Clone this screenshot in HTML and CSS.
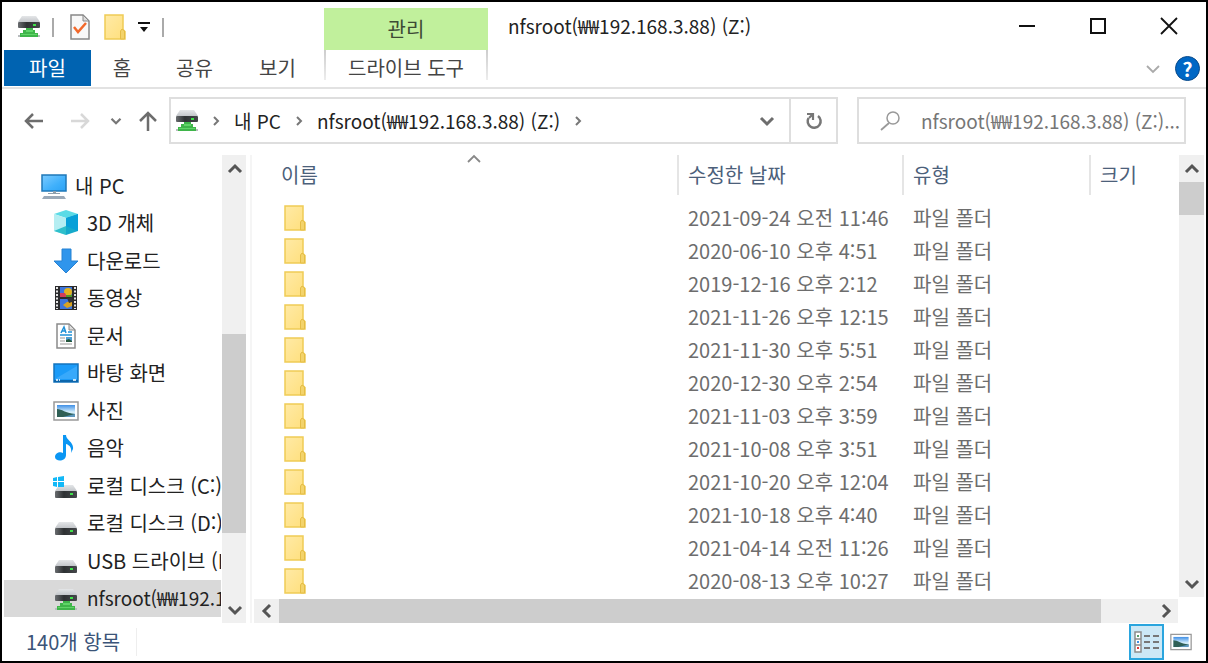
FILE: index.html
```html
<!DOCTYPE html>
<html lang="ko">
	<head>
		<meta charset="UTF-8" />
		<meta name="viewport" content="width=device-width, initial-scale=1.0" />
		<title>nfsroot(₩₩192.168.3.88) (Z:)</title>
		<link rel="stylesheet" href="styles.css">
	</head>
	<body>
		<!-- shared icons -->
		<svg class="sprite" aria-hidden="true">
			<defs>
				<linearGradient id="gFolder" x1="0" y1="0" x2="1" y2="1">
					<stop offset="0" stop-color="#ffeaa6" />
					<stop offset="1" stop-color="#ffdf7c" />
				</linearGradient>
				<linearGradient id="gScreen" x1="0" y1="0" x2="1" y2="1">
					<stop offset="0" stop-color="#7ccbff" />
					<stop offset="0.6" stop-color="#3fb0fb" />
					<stop offset="1" stop-color="#2ba2f5" />
				</linearGradient>
				<linearGradient id="gTop" x1="0" y1="0" x2="0" y2="1">
					<stop offset="0" stop-color="#e4e6e8" />
					<stop offset="1" stop-color="#c3c6ca" />
				</linearGradient>
				<linearGradient id="gBody" x1="0" y1="0" x2="1" y2="0">
					<stop offset="0" stop-color="#6a6d70" />
					<stop offset="0.4" stop-color="#2e3133" />
					<stop offset="1" stop-color="#45484b" />
				</linearGradient>
				<linearGradient id="gSky" x1="0" y1="0" x2="0" y2="1">
					<stop offset="0" stop-color="#3f8fe6" />
					<stop offset="0.6" stop-color="#d8f0fb" />
					<stop offset="1" stop-color="#8fc3e8" />
				</linearGradient>
			</defs>
			<symbol id="folder" viewBox="0 0 22 26">
				<path d="M1 1h18v14.500l2 2V25H1z" fill="url(#gFolder)" stroke="#f0cc55" stroke-width="1.500" />
				<path d="M16.500 25v-8l1.500-2 2.500 2V25z" fill="#f3d36b" stroke="#e5bd45" />
			</symbol>
			<symbol id="netdrive" viewBox="0 0 22 22">
				<path d="M4 0h14l4 6H0z" fill="url(#gTop)" />
				<rect x="0" y="6" width="22" height="6" rx="1" fill="url(#gBody)" />
				<rect x="15" y="8" width="3" height="2" fill="#3fe04a" />
				<path d="M8 12h7v2h2v3h3v4H2v-4h3v-3h3z" fill="#3fb54a" />
				<path d="M8 14h7v2H8zM3 18h16v1H3z" fill="#5fd567" />
				<path d="M0 19h2v2H0zM20 19h2v2h-2z" fill="#b9bcbf" />
			</symbol>
			<symbol id="drive" viewBox="0 0 26 26">
				<path d="M6 12h14l4 6H2z" fill="url(#gTop)" />
				<rect x="2" y="18" width="22" height="7" rx="1" fill="url(#gBody)" />
				<rect x="17" y="20" width="3" height="2" fill="#3fe04a" />
			</symbol>
			<symbol id="windrive" viewBox="0 0 26 26">
				<use href="#drive" />
				<path d="M0 5l4-1v4H0zM5 4l6-1v5H5zM0 9h4v5l-4-1zM5 9h6v5H5z" fill="#12b8f7" />
			</symbol>
			<symbol id="pc" viewBox="0 0 26 26">
				<rect x="1" y="2" width="24" height="16" fill="url(#gScreen)" stroke="#1f78b8" stroke-width="1.500" />
				<path d="M12 18h3v2h4v1H7v-1h5z" fill="#8fa0ad" />
				<path d="M3 23h20l2 3H1z" fill="#9aa9b8" />
			</symbol>
			<symbol id="cube" viewBox="0 0 26 26">
				<path d="M13 0l12 4-12 4L1 4z" fill="#5bdbe6" />
				<path d="M1 4l12 4v17L1 21z" fill="#b5eef2" />
				<path d="M1 21l12-5v9z" fill="#2fbfcb" />
				<path d="M25 4L13 8v17l12-4z" fill="#16aacb" />
				<path d="M25 4v17l-12-5V8z" fill="#08a0d8" />
			</symbol>
			<symbol id="download" viewBox="0 0 26 26">
				<path d="M9 1h9v12h7L13 25 1 13h8z" fill="#2f95ec" stroke="#2782d3" />
			</symbol>
			<symbol id="video" viewBox="0 0 26 26">
				<rect x="2" y="1" width="22" height="24" fill="#2b2b2d" />
				<path d="M4 2v22M22 2v22" stroke="#e6e6e6" stroke-width="2" stroke-dasharray="2 1.500" />
				<path d="M7 2h12v10H7zM7 14h12v10H7z" fill="#3c75dc" />
				<circle cx="15" cy="7" r="4" fill="#e3b31f" />
				<path d="M7 8h5l2 4H7z" fill="#d23e59" />
				<path d="M13 10h6v2h-6z" fill="#4f9a2c" />
				<path d="M10 20l4-3 5-1v5l-5 2z" fill="#d9a321" />
				<path d="M14 13h5v4l-3 1z" fill="#30333a" />
			</symbol>
			<symbol id="doc" viewBox="0 0 26 26">
				<path d="M4 1h12l6 6v18H4z" fill="#fff" stroke="#8b8b8b" stroke-width="1.500" />
				<path d="M16 1v6h6z" fill="#ddd" stroke="#8b8b8b" />
				<path d="M8 10l3-6 2 6M9 8h4" fill="none" stroke="#2091d8" stroke-width="1.500" />
				<path d="M15 9h4M7 12h12" stroke="#2091d8" stroke-width="1.500" />
				<path d="M7 15h5M7 18h5M7 21h12" stroke="#999" />
				<path d="M13 14h6v5h-6z" fill="#4e9fd3" />
				<path d="M13 19v-2l3-1 3 2v1z" fill="#25573e" />
			</symbol>
			<symbol id="desktop" viewBox="0 0 26 26">
				<rect x="1" y="4" width="24" height="18" fill="#1b9bf8" stroke="#1574bd" stroke-width="1.500" />
				<path d="M2 19L24 6v13z" fill="#38a9fb" />
				<path d="M1 20h24v2H1z" fill="#0c66ac" />
				<path d="M3 20h2M6 20h1M20 20h3" stroke="#fff" stroke-width="1.500" />
			</symbol>
			<symbol id="picture" viewBox="0 0 26 20">
				<rect x="1" y="1" width="24" height="18" fill="#fff" stroke="#999" stroke-width="1.500" />
				<rect x="4" y="4" width="18" height="12" fill="url(#gSky)" />
				<path d="M4 8c5 0 8 4 18 5v1l-7 2H4z" fill="#2f5f55" />
				<path d="M10 16l12-3v3z" fill="#5d97bd" />
			</symbol>
			<symbol id="music" viewBox="0 0 26 26">
				<path d="M10 0h3c0 5 8 7 7 14l-2 4c1-6-2-8-5-9v11c0 7-11 7-11 2 0-4 5-6 8-4z" fill="#0b96f3" />
			</symbol>
			<symbol id="chevR" viewBox="0 0 10 10">
				<path d="M3 1l4 4-4 4" fill="none" stroke="currentColor" stroke-width="2" />
			</symbol>
			<symbol id="chevD" viewBox="0 0 16 16">
				<path d="M2 5l6 6 6-6" fill="none" stroke="currentColor" stroke-width="3" />
			</symbol>
			<symbol id="thinD" viewBox="0 0 16 16">
				<path d="M2 5l6 6 6-6" fill="none" stroke="currentColor" stroke-width="1.800" />
			</symbol>
		</svg>

		<div class="window">
			<header class="ribbon">
				<div class="quick-access">
					<svg class="icon-22"><use href="#netdrive" /></svg>
					<span class="divider"></span>
					<button class="quick-btn check" aria-label="속성">
						<svg viewBox="0 0 20 26" width="20" height="26">
							<path d="M1 1h12l6 6v18H1z" fill="#f8f8f8" stroke="#888" stroke-width="1.500" />
							<path d="M13 1v6h6z" fill="#ddd" stroke="#888" />
							<path d="M4 13l4 5 8-9" fill="none" stroke="#f2682a" stroke-width="2.500" />
						</svg>
					</button>
					<button class="quick-btn new-folder" aria-label="새 폴더">
						<svg class="icon-folder"><use href="#folder" /></svg>
					</button>
					<button class="quick-btn" aria-label="빠른 실행 도구 모음 사용자 지정">
						<svg viewBox="0 0 12 12" width="12" height="12">
							<path d="M0 1h12v2H0zM2 6h8l-4 5z" fill="#111" />
						</svg>
					</button>
					<span class="divider"></span>
				</div>
				<div class="context-title">관리</div>
				<div class="title-area">
					<h1>nfsroot(₩₩192.168.3.88) (Z:)</h1>
					<div class="window-buttons">
						<button aria-label="최소화">
							<svg viewBox="0 0 18 18" width="18" height="18"><path d="M1 9h16" stroke="#111" stroke-width="2" /></svg>
						</button>
						<button aria-label="최대화">
							<svg viewBox="0 0 18 18" width="18" height="18"><path d="M2 2h14v14H2z" fill="none" stroke="#111" stroke-width="2" /></svg>
						</button>
						<button aria-label="닫기">
							<svg viewBox="0 0 18 18" width="18" height="18"><path d="M1 1l16 16M17 1L1 17" stroke="#111" stroke-width="1.800" /></svg>
						</button>
					</div>
				</div>
				<div class="tabs">
					<button class="tab file">파일</button>
					<button class="tab home">홈</button>
					<button class="tab">공유</button>
					<button class="tab">보기</button>
				</div>
				<button class="tab context">드라이브 도구</button>
				<div class="ribbon-tools">
					<button class="expand" aria-label="리본 확장"><svg class="icon-16"><use href="#thinD" /></svg></button>
					<button class="help" aria-label="도움말">?</button>
				</div>
			</header>

			<div class="nav-row">
				<div class="history">
					<button aria-label="뒤로">
						<svg viewBox="0 0 20 20" width="20" height="20"><path d="M19 10H2M9 3l-7 7 7 7" fill="none" stroke="#6d6d6d" stroke-width="2.500" /></svg>
					</button>
					<button aria-label="앞으로" class="forward">
						<svg viewBox="0 0 20 20" width="20" height="20"><path d="M1 10h17M11 3l7 7-7 7" fill="none" stroke="#d8d8d8" stroke-width="2.500" /></svg>
					</button>
					<button aria-label="최근 위치" class="recent"><svg class="icon-12"><use href="#chevD" /></svg></button>
					<button aria-label="위로">
						<svg viewBox="0 0 20 20" width="20" height="20"><path d="M10 20V2M2 10l8-8 8 8" fill="none" stroke="#6d6d6d" stroke-width="2.500" /></svg>
					</button>
				</div>
				<div class="address">
					<svg class="icon-22"><use href="#netdrive" /></svg>
					<svg class="crumb-arrow"><use href="#chevR" /></svg>
					<a href="#pc-root">내 PC</a>
					<svg class="crumb-arrow"><use href="#chevR" /></svg>
					<a href="#z">nfsroot(₩₩192.168.3.88) (Z:)</a>
					<svg class="crumb-arrow"><use href="#chevR" /></svg>
					<button class="dropdown" aria-label="이전 위치"><svg class="icon-16"><use href="#chevD" /></svg></button>
					<button class="refresh" aria-label="새로 고침">
						<svg viewBox="0 0 18 18" width="18" height="18">
							<path d="M13 4a6.500 6.500 0 1 1-9.500 2" fill="none" stroke="#777" stroke-width="2.500" />
							<path d="M2 2h6v6M8 2L4 6" fill="none" stroke="#777" stroke-width="2.200" />
						</svg>
					</button>
				</div>
				<label class="search">
					<svg viewBox="0 0 22 20" width="22" height="20">
						<circle cx="14" cy="7" r="6" fill="none" stroke="#999" stroke-width="1.500" />
						<path d="M10 12l-8 7" stroke="#999" stroke-width="1.800" />
					</svg>
					<input type="text" aria-label="검색" placeholder="nfsroot(₩₩192.168.3.88) (Z:)...">
				</label>
			</div>

			<div class="content">
				<nav class="tree">
					<a href="#pc-root" class="root"><svg><use href="#pc" /></svg>내 PC</a>
					<a href="#3d"><svg><use href="#cube" /></svg>3D 개체</a>
					<a href="#downloads"><svg><use href="#download" /></svg>다운로드</a>
					<a href="#videos"><svg><use href="#video" /></svg>동영상</a>
					<a href="#documents"><svg><use href="#doc" /></svg>문서</a>
					<a href="#desk"><svg><use href="#desktop" /></svg>바탕 화면</a>
					<a href="#pictures"><svg><use href="#picture" /></svg>사진</a>
					<a href="#sounds"><svg><use href="#music" /></svg>음악</a>
					<a href="#c"><svg><use href="#windrive" /></svg>로컬 디스크 (C:)</a>
					<a href="#d"><svg><use href="#drive" /></svg>로컬 디스크 (D:)</a>
					<a href="#h"><svg><use href="#drive" /></svg>USB 드라이브 (H:)</a>
					<a href="#z" class="selected"><svg class="net"><use href="#netdrive" /></svg>nfsroot(₩₩192.168.3.88) (Z:)</a>
				</nav>
				<div class="scrollbar tree-scroll">
					<button aria-label="위로 스크롤"><svg class="icon-16 up"><use href="#chevD" /></svg></button>
					<div class="track"><div class="thumb"></div></div>
					<button aria-label="아래로 스크롤"><svg class="icon-16"><use href="#chevD" /></svg></button>
				</div>

				<main class="files">
					<div class="list">
						<table>
							<thead>
								<tr>
									<th class="col-name"><span>이름<svg class="icon-16 sort"><use href="#thinD" /></svg></span></th>
									<th class="col-date"><span>수정한 날짜</span></th>
									<th class="col-type"><span>유형</span></th>
									<th class="col-size"><span>크기</span></th>
								</tr>
							</thead>
							<tbody>
								<tr><td><svg class="icon-folder"><use href="#folder" /></svg></td><td>2021-09-24 오전 11:46</td><td>파일 폴더</td><td></td></tr>
								<tr><td><svg class="icon-folder"><use href="#folder" /></svg></td><td>2020-06-10 오후 4:51</td><td>파일 폴더</td><td></td></tr>
								<tr><td><svg class="icon-folder"><use href="#folder" /></svg></td><td>2019-12-16 오후 2:12</td><td>파일 폴더</td><td></td></tr>
								<tr><td><svg class="icon-folder"><use href="#folder" /></svg></td><td>2021-11-26 오후 12:15</td><td>파일 폴더</td><td></td></tr>
								<tr><td><svg class="icon-folder"><use href="#folder" /></svg></td><td>2021-11-30 오후 5:51</td><td>파일 폴더</td><td></td></tr>
								<tr><td><svg class="icon-folder"><use href="#folder" /></svg></td><td>2020-12-30 오후 2:54</td><td>파일 폴더</td><td></td></tr>
								<tr><td><svg class="icon-folder"><use href="#folder" /></svg></td><td>2021-11-03 오후 3:59</td><td>파일 폴더</td><td></td></tr>
								<tr><td><svg class="icon-folder"><use href="#folder" /></svg></td><td>2021-10-08 오후 3:51</td><td>파일 폴더</td><td></td></tr>
								<tr><td><svg class="icon-folder"><use href="#folder" /></svg></td><td>2021-10-20 오후 12:04</td><td>파일 폴더</td><td></td></tr>
								<tr><td><svg class="icon-folder"><use href="#folder" /></svg></td><td>2021-10-18 오후 4:40</td><td>파일 폴더</td><td></td></tr>
								<tr><td><svg class="icon-folder"><use href="#folder" /></svg></td><td>2021-04-14 오전 11:26</td><td>파일 폴더</td><td></td></tr>
								<tr><td><svg class="icon-folder"><use href="#folder" /></svg></td><td>2020-08-13 오후 10:27</td><td>파일 폴더</td><td></td></tr>
							</tbody>
						</table>
					</div>
					<div class="scrollbar list-scroll">
						<button aria-label="위로 스크롤"><svg class="icon-16 up"><use href="#chevD" /></svg></button>
						<div class="track"><div class="thumb"></div></div>
						<button aria-label="아래로 스크롤"><svg class="icon-16"><use href="#chevD" /></svg></button>
					</div>
					<div class="scrollbar horizontal">
						<button aria-label="왼쪽으로 스크롤"><svg class="icon-16 left"><use href="#chevD" /></svg></button>
						<div class="track"><div class="thumb"></div></div>
						<button aria-label="오른쪽으로 스크롤"><svg class="icon-16 right"><use href="#chevD" /></svg></button>
					</div>
				</main>
			</div>

			<footer class="status">
				<span class="count">140개 항목</span>
				<div class="views">
					<button class="view active" aria-label="자세히">
						<svg viewBox="0 0 28 24" width="28" height="24">
							<path d="M2 2h6v20H2zM2 9h6M2 15h6" fill="#fff" stroke="#8c8c8c" stroke-width="1.500" />
							<path d="M4 5h2v2H4z" fill="#56a06a" />
							<path d="M4 11h2v2H4z" fill="#3f8fe6" />
							<path d="M4 17h2v2H4z" fill="#e23838" />
							<path d="M11 6h6M20 6h6M11 12h6M20 12h6M11 18h6M20 18h6" stroke="#777" stroke-width="2" />
						</svg>
					</button>
					<button class="view" aria-label="큰 아이콘">
						<svg class="thumb-icon"><use href="#picture" /></svg>
					</button>
				</div>
			</footer>
		</div>
	</body>
</html>
```
FILE: styles.css
```css
* {
	box-sizing: border-box;
}

body {
	margin: 0;
	font-family: "Noto Sans CJK KR", "Noto Sans", sans-serif;
	font-size: 20px;
	line-height: 28px;
	color: #222;
	background: #fff;
}

button {
	display: flex;
	align-items: center;
	justify-content: center;
	padding: 0;
	border: none;
	background: none;
	font: inherit;
	color: inherit;
	cursor: pointer;
}

a {
	color: inherit;
	text-decoration: none;
}

svg {
	display: block;
	flex-shrink: 0;
}

.sprite {
	position: absolute;
	width: 0;
	height: 0;
}

.icon-22 {
	width: 22px;
	height: 22px;
}

.icon-16 {
	width: 16px;
	height: 16px;
}

.icon-12 {
	width: 12px;
	height: 12px;
}

.icon-folder {
	width: 22px;
	height: 26px;
}

.up {
	transform: rotate(180deg);
}

.left {
	transform: rotate(90deg);
}

.right {
	transform: rotate(-90deg);
}

.window {
	display: flex;
	flex-direction: column;
	min-height: 100vh;
	border: 2px solid #000;
}

/* Title bar and tabs */
.ribbon {
	display: grid;
	grid-template-columns: 322px 164px 1fr;
	grid-template-rows: 42px 37px;
	padding-top: 6px;
	border-bottom: 2px solid #e2e2e2;
}

.quick-access {
	display: flex;
	align-items: center;
	gap: 12px;
	padding: 0 0 4px 16px;
}

.divider {
	width: 2px;
	height: 19px;
	background: #aaa;
}

.quick-btn.check {
	margin-left: 4px;
}

.new-folder {
	margin-left: 2px;
}

.context-title {
	display: flex;
	align-items: center;
	justify-content: center;
	background: #c1f09c;
	color: #3d4a35;
}

.title-area {
	display: flex;
	justify-content: space-between;
	align-items: center;
	padding: 0 28px 6px 20px;
}

.title-area h1 {
	margin: 0;
	font-size: 19px;
	font-weight: normal;
	white-space: nowrap;
}

.window-buttons {
	display: flex;
	gap: 53px;
}

.tabs {
	display: flex;
	padding-left: 2px;
}

.tab {
	width: 83px;
	height: 36px;
	color: #444;
}

.tab.file {
	width: 87px;
	background: #0063b1;
	color: #fff;
}

.tab.home {
	width: 62px;
}

.tab.context {
	width: 100%;
	height: 30px;
	padding-top: 5px;
	border: 2px solid;
	border-width: 0 2px;
	border-image: linear-gradient(#ccc, #eee) 1;
}

.ribbon-tools {
	display: flex;
	justify-content: flex-end;
	align-items: center;
	gap: 14px;
	padding-right: 6px;
}

.expand {
	color: #aaa;
}

.help {
	width: 25px;
	height: 25px;
	border: 1px solid #0a4a8a;
	border-radius: 50%;
	background: #0067c5;
	color: #fff;
	font-weight: bold;
}

/* Address bar */
.nav-row {
	display: flex;
	padding: 8px 20px 11px 22px;
}

.history {
	display: flex;
	align-items: center;
	width: 145px;
	color: #777;
}

.forward {
	margin-left: 26px;
}

.recent {
	margin: 0 16px 0 20px;
}

.address {
	display: flex;
	align-items: center;
	flex: 1;
	height: 47px;
	padding-left: 5px;
	border: 2px solid #dedede;
	font-size: 19px;
	white-space: nowrap;
}

.crumb-arrow {
	width: 10px;
	height: 10px;
	margin: 0 13px;
	color: #777;
}

.dropdown {
	margin-left: auto;
	padding: 0 14px;
	color: #6d6d6d;
}

.refresh {
	width: 47px;
	align-self: stretch;
	border-left: 2px solid #dedede;
}

.search {
	display: flex;
	align-items: center;
	gap: 20px;
	width: 329px;
	margin-left: 19px;
	padding-left: 20px;
	border: 2px solid #dedede;
	font-size: 19px;
}

.search input {
	flex: 1;
	min-width: 0;
	padding: 0;
	border: none;
	outline: none;
	font: inherit;
}

.search input::placeholder {
	color: #767676;
	opacity: 1;
}

/* Navigation tree and file list */
.content {
	display: flex;
	flex: 1;
}

.tree {
	display: flex;
	flex-direction: column;
	width: 219px;
	padding: 12px 0 6px 2px;
}

.tree a {
	display: flex;
	align-items: center;
	flex: 1;
	gap: 8px;
	padding-left: 49px;
	overflow: hidden;
	white-space: nowrap;
}

.tree a.root {
	padding-left: 37px;
}

.tree svg {
	width: 26px;
	height: 26px;
}

.tree svg.net {
	width: 22px;
	height: 22px;
	margin: 4px 2px 0;
}

.tree a.selected {
	background: #d9d9d9;
	font-size: 19px;
}

.scrollbar {
	display: flex;
	flex-direction: column;
	width: 25px;
	background: #f0f0f0;
	color: #555;
}

.scrollbar button {
	width: 25px;
	height: 27px;
}

.track {
	display: flex;
	flex: 1;
}

.thumb {
	flex: 1;
	background: #cdcdcd;
}

.tree-scroll {
	margin-left: 1px;
	border-right: 1px solid #fff;
}

.tree-scroll .thumb {
	height: 48%;
	margin-top: 152px;
}

.files {
	display: grid;
	grid-template-columns: 1fr 25px;
	grid-template-rows: 1fr 24px;
	flex: 1;
	row-gap: 2px;
	column-gap: 1px;
	margin: 0 2px 0 3px;
	padding-left: 2px;
	border-left: 2px solid #f5f5f5;
}

.list-scroll .thumb {
	height: 33px;
}

.horizontal {
	flex-direction: row;
	align-items: center;
	width: auto;
}

.horizontal .track {
	align-self: stretch;
}

.horizontal .thumb {
	flex: 0 0 94%;
}

table {
	width: 100%;
	table-layout: fixed;
	border-collapse: collapse;
}

th {
	height: 46px;
	padding: 0;
	font-weight: normal;
	text-align: left;
	vertical-align: top;
	color: #4c607a;
}

th span {
	display: flex;
	align-items: center;
	height: 40px;
	padding-left: 9px;
	border-left: 2px solid #e5e5e5;
}

.col-name span {
	position: relative;
	padding-left: 27px;
	border-left: none;
}

/* the sort arrow hangs on the top edge of the header */
.sort {
	position: absolute;
	top: -4px;
	left: 50%;
	transform: rotate(180deg);
	color: #888;
}

.col-date {
	width: 225px;
}

.col-type {
	width: 187px;
}

.col-size {
	width: 89px;
}

td {
	height: 33px;
	padding: 0 0 0 11px;
	color: #6d6d6d;
	white-space: nowrap;
}

td:first-child {
	padding-left: 30px;
}

/* Status bar */
.status {
	display: flex;
	justify-content: space-between;
	align-items: center;
	height: 38px;
	padding: 0 12px 0 24px;
	color: #3b5478;
}

.count {
	padding-right: 16px;
	border-right: 1px solid #eee;
}

.views {
	display: flex;
	gap: 4px;
}

.view {
	width: 26px;
	height: 36px;
}

.view.active {
	width: 35px;
	border: 2px solid #2aa5de;
	background: #cce8f6;
}

.thumb-icon {
	width: 22px;
	height: 18px;
}
```
